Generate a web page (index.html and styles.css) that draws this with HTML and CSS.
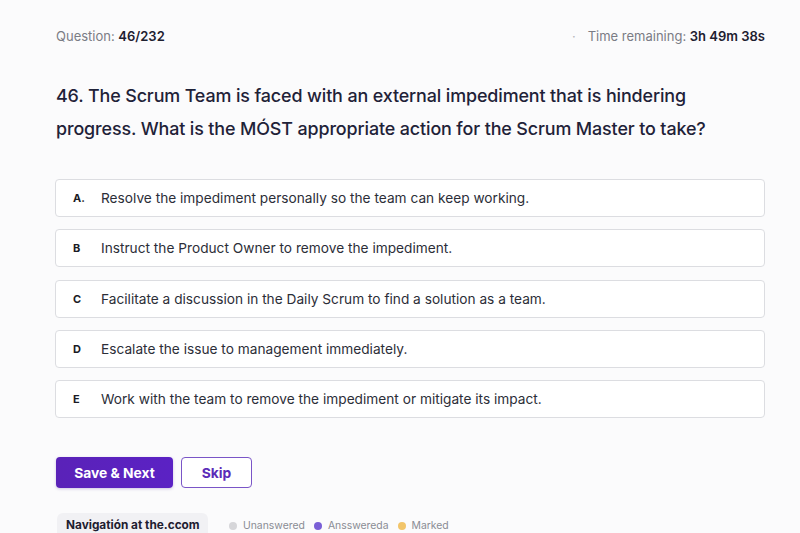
FILE: index.html
```html
<!DOCTYPE html>
<html lang="en">
<head>
<meta charset="utf-8">
<title>Question 46</title>
<link rel="stylesheet" href="styles.css">
</head>
<body>
<main class="page">
  <header class="topbar">
    <div class="counter">Question: <strong>46/232</strong></div>
    <div class="timer"><span class="tick">·</span><span>Time remaining: <strong>3h 49m 38s</strong></span></div>
  </header>

  <h1 class="question">46. The Scrum Team is faced with an external impediment that is hindering progress. What is the MÓST appropriate action for the Scrum Master to take?</h1>

  <ul class="options">
    <li class="option"><span class="key">A.</span><span class="text">Resolve the impediment personally so the team can keep working.</span></li>
    <li class="option"><span class="key">B</span><span class="text">Instruct the Product Owner to remove the impediment.</span></li>
    <li class="option"><span class="key">C</span><span class="text">Facilitate a discussion in the Daily Scrum to find a solution as a team.</span></li>
    <li class="option"><span class="key">D</span><span class="text">Escalate the issue to management immediately.</span></li>
    <li class="option"><span class="key">E</span><span class="text">Work with the team to remove the impediment or mitigate its impact.</span></li>
  </ul>

  <div class="actions">
    <button class="btn btn-primary">Save &amp; Next</button>
    <button class="btn btn-outline">Skip</button>
  </div>

  <footer class="navbar">
    <div class="nav-pill">Navigatión at the.ccom</div>
    <ul class="legend">
      <li><span class="dot dot-gray"></span>Unanswered</li>
      <li><span class="dot dot-purple"></span>Ansswereda</li>
      <li><span class="dot dot-yellow"></span>Marked</li>
    </ul>
  </footer>
</main>
</body>
</html>
```

FILE: styles.css
```css
* { box-sizing: border-box; }
html, body { margin: 0; padding: 0; }
body {
  background: #fbfbfc;
  font-family: Inter, "Noto Sans", "Liberation Sans", sans-serif;
  color: #23253a;
  height: 533px;
  overflow: hidden;
}
.page {
  padding: 27px 35px 0 56px;
}
.topbar {
  display: flex;
  justify-content: space-between;
  align-items: center;
  height: 18px;
  font-size: 13px;
  color: #7a7c85;
}
.topbar strong { color: #1e2030; font-weight: 600; }
.timer { display: flex; align-items: center; }
.tick { color: #b5b6bb; margin-right: 12px; }
.question {
  margin: 34px 0 0;
  font-size: 17.9px;
  line-height: 33px;
  font-weight: 500;
  color: #1f2238;
  letter-spacing: -0.12px;
  max-width: 700px;
}
.options {
  list-style: none;
  margin: 34px 0 0;
  padding: 0;
  display: flex;
  flex-direction: column;
  gap: 12.3px;
}
.option {
  display: flex;
  align-items: center;
  height: 38px;
  margin-left: -1px;
  padding-left: 17px;
  border: 1px solid #dcdde1;
  border-radius: 4px;
  background: #fff;
  font-size: 13.7px;
  color: #2c2e38;
}
.key {
  width: 28px;
  font-size: 11px;
  font-weight: 700;
  color: #1a1b24;
}
.actions {
  display: flex;
  gap: 8px;
  margin-top: 39px;
}
.btn {
  height: 31px;
  border-radius: 4px;
  font-family: inherit;
  font-size: 13.8px;
  font-weight: 700;
  cursor: pointer;
}
.btn-primary {
  width: 117px;
  border: none;
  color: #fff;
  background: linear-gradient(90deg, #5a22b8, #5b22c4);
  box-shadow: 0 1px 3px rgba(70, 30, 150, 0.25);
}
.btn-outline {
  width: 71px;
  border: 1px solid #7a55c7;
  background: #fff;
  color: #5b2bb8;
}
.navbar {
  display: flex;
  align-items: flex-start;
  margin-top: 25px;
}
.nav-pill {
  width: 151px;
  height: 26px;
  padding: 5px 0 0 9px;
  margin-left: 1px;
  background: #f1f1f4;
  border-radius: 6px;
  font-size: 11.8px;
  font-weight: 700;
  color: #1e2030;
}
.legend {
  list-style: none;
  margin: 0 0 0 21px;
  padding: 6px 0 0;
  display: flex;
  gap: 9px;
  font-size: 10.4px;
  color: #8a8c94;
}
.legend li { display: flex; align-items: center; }
.dot {
  width: 8px;
  height: 8px;
  border-radius: 50%;
  margin-right: 6px;
}
.dot-gray { background: #d6d6d9; }
.dot-purple { background: #7a5fd6; }
.dot-yellow { background: #f2c56a; }
```
